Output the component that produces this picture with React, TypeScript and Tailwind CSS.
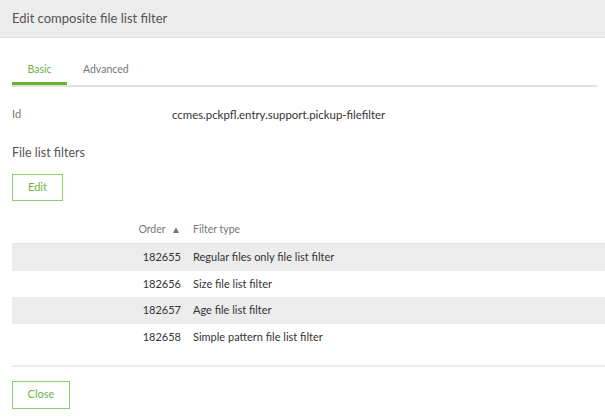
const rows = [
  { order: 182655, type: "Regular files only file list filter" },
  { order: 182656, type: "Size file list filter" },
  { order: 182657, type: "Age file list filter" },
  { order: 182658, type: "Simple pattern file list filter" },
];

export default function App() {
  return (
    <div className="w-[605px] h-[420px] bg-white overflow-hidden font-['Lato',sans-serif] text-[#555]">
      <div className="h-[38px] bg-[#ececec] border-b border-[#e0e0e0] flex items-center px-3">
        <h2 className="text-[13px] text-[#555]">Edit composite file list filter</h2>
      </div>

      <div className="pl-3">
        <div className="mr-2 mt-[19px] flex border-b-2 border-[#e0e0e0]">
          <button className="w-[55px] h-[28px] pt-[5px] leading-[15px] text-[10.5px] text-[#6ab43e] border-b-[3px] border-[#6ab42d] -mb-[2px] text-center flex justify-center items-start">
            Basic
          </button>
          <button className="px-[16px] h-[28px] pt-[5px] leading-[15px] text-[10.5px] text-[#777] flex items-start">
            Advanced
          </button>
        </div>

        <div className="mt-[19px] flex items-center">
          <span className="w-[160px] text-[11px] text-[#777]">Id</span>
          <span className="text-[#333] text-[11.4px]">ccmes.pckpfl.entry.support.pickup-filefilter</span>
        </div>

        <h3 className="mt-[21px] text-[12.5px] text-[#555]">File list filters</h3>

        <button className="mt-[11px] w-[51px] h-[27px] border border-[#8fce6c] text-[11px] text-[#6ab43e]">
          Edit
        </button>

        <table className="mt-[15px] w-full text-[11px] border-collapse">
          <thead>
            <tr className="h-[28px] text-[#777]">
              <th className="w-[181px] pr-3 text-right font-normal text-[10.5px]">
                Order <span className="text-[10px] ml-[3px]">▲</span>
              </th>
              <th className="text-left font-normal text-[10.5px]">Filter type</th>
            </tr>
          </thead>
          <tbody className="border-t border-[#e4e4e4]">
            {rows.map((r, i) => (
              <tr key={r.order} className={`h-[26.7px] text-[#333] ${i % 2 === 0 ? "bg-[#ececec]" : "bg-white"}`}>
                <td className="pr-3 text-right">{r.order}</td>
                <td>{r.type}</td>
              </tr>
            ))}
          </tbody>
        </table>

        <div className="mt-[14px] border-t-2 border-[#ececec]" />

        <button className="mt-[14px] w-[58px] h-[28px] border border-[#8fce6c] text-[11px] text-[#6ab43e]">
          Close
        </button>
      </div>
    </div>
  );
}
